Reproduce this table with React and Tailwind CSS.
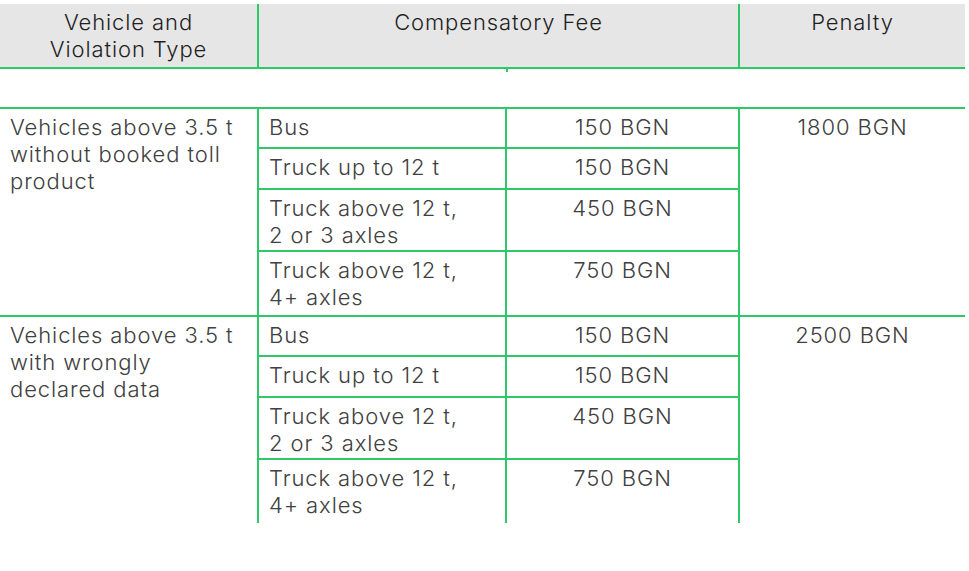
import React from 'react';

const groups = [
  {
    type: 'Vehicles above 3.5 t without booked toll product',
    penalty: '1800 BGN',
  },
  {
    type: 'Vehicles above 3.5 t with wrongly declared data',
    penalty: '2500 BGN',
  },
];

const fees = [
  { label: ['Bus'], fee: '150 BGN', h: 'h-[40px]' },
  { label: ['Truck up to 12 t'], fee: '150 BGN', h: 'h-[41px]' },
  { label: ['Truck above 12 t,', '2 or 3 axles'], fee: '450 BGN', h: 'h-[62px]' },
  { label: ['Truck above 12 t,', '4+ axles'], fee: '750 BGN', h: 'h-[63px]' },
];

const App = () => {
  return (
    <div
      className="w-[969px] h-[571px] bg-white pt-1 text-[22px] leading-[27px] font-light tracking-[0.9px] text-[#404040]"
      style={{ fontFamily: 'Inter, "Open Sans", sans-serif' }}
    >
      <div className="w-[965px]">
        {/* header */}
        <div className="flex h-[65px] bg-[#e6e6e6] border-b-2 border-[#2ec866] text-[#1f1f1f]">
          <div className="w-[259px] border-r-2 border-[#2ec866] text-center pt-[5px]">
            Vehicle and
            <br />
            Violation Type
          </div>
          <div className="w-[481px] border-r-2 border-[#2ec866] text-center pt-[5px]">
            Compensatory Fee
          </div>
          <div className="flex-1 text-center pt-[5px]">Penalty</div>
        </div>

        <div className="h-[38px] pl-[506px]">
          <div className="w-[2px] h-[3px] bg-[#2ec866]" />
        </div>

        {groups.map((g, gi) => (
          <div key={gi} className="flex border-t-2 border-[#2ec866]">
            <div className="w-[259px] border-r-2 border-[#2ec866] pl-[10px] pr-2 pt-[5px]">
              {g.type}
            </div>
            <div className="w-[481px] border-r-2 border-[#2ec866] flex flex-col">
              {fees.map((f, fi) => (
                <div
                  key={fi}
                  className={`flex ${f.h} ${fi < fees.length - 1 ? 'border-b-2 border-[#2ec866]' : ''}`}
                >
                  <div className="w-[248px] border-r-2 border-[#2ec866] pl-[10px] pt-[5px]">
                    {f.label.map((l, li) => (
                      <div key={li}>{l}</div>
                    ))}
                  </div>
                  <div className="flex-1 text-center pt-[5px]">{f.fee}</div>
                </div>
              ))}
            </div>
            <div className="flex-1 text-center pt-[5px]">{g.penalty}</div>
          </div>
        ))}
      </div>
    </div>
  );
};

export default App;
